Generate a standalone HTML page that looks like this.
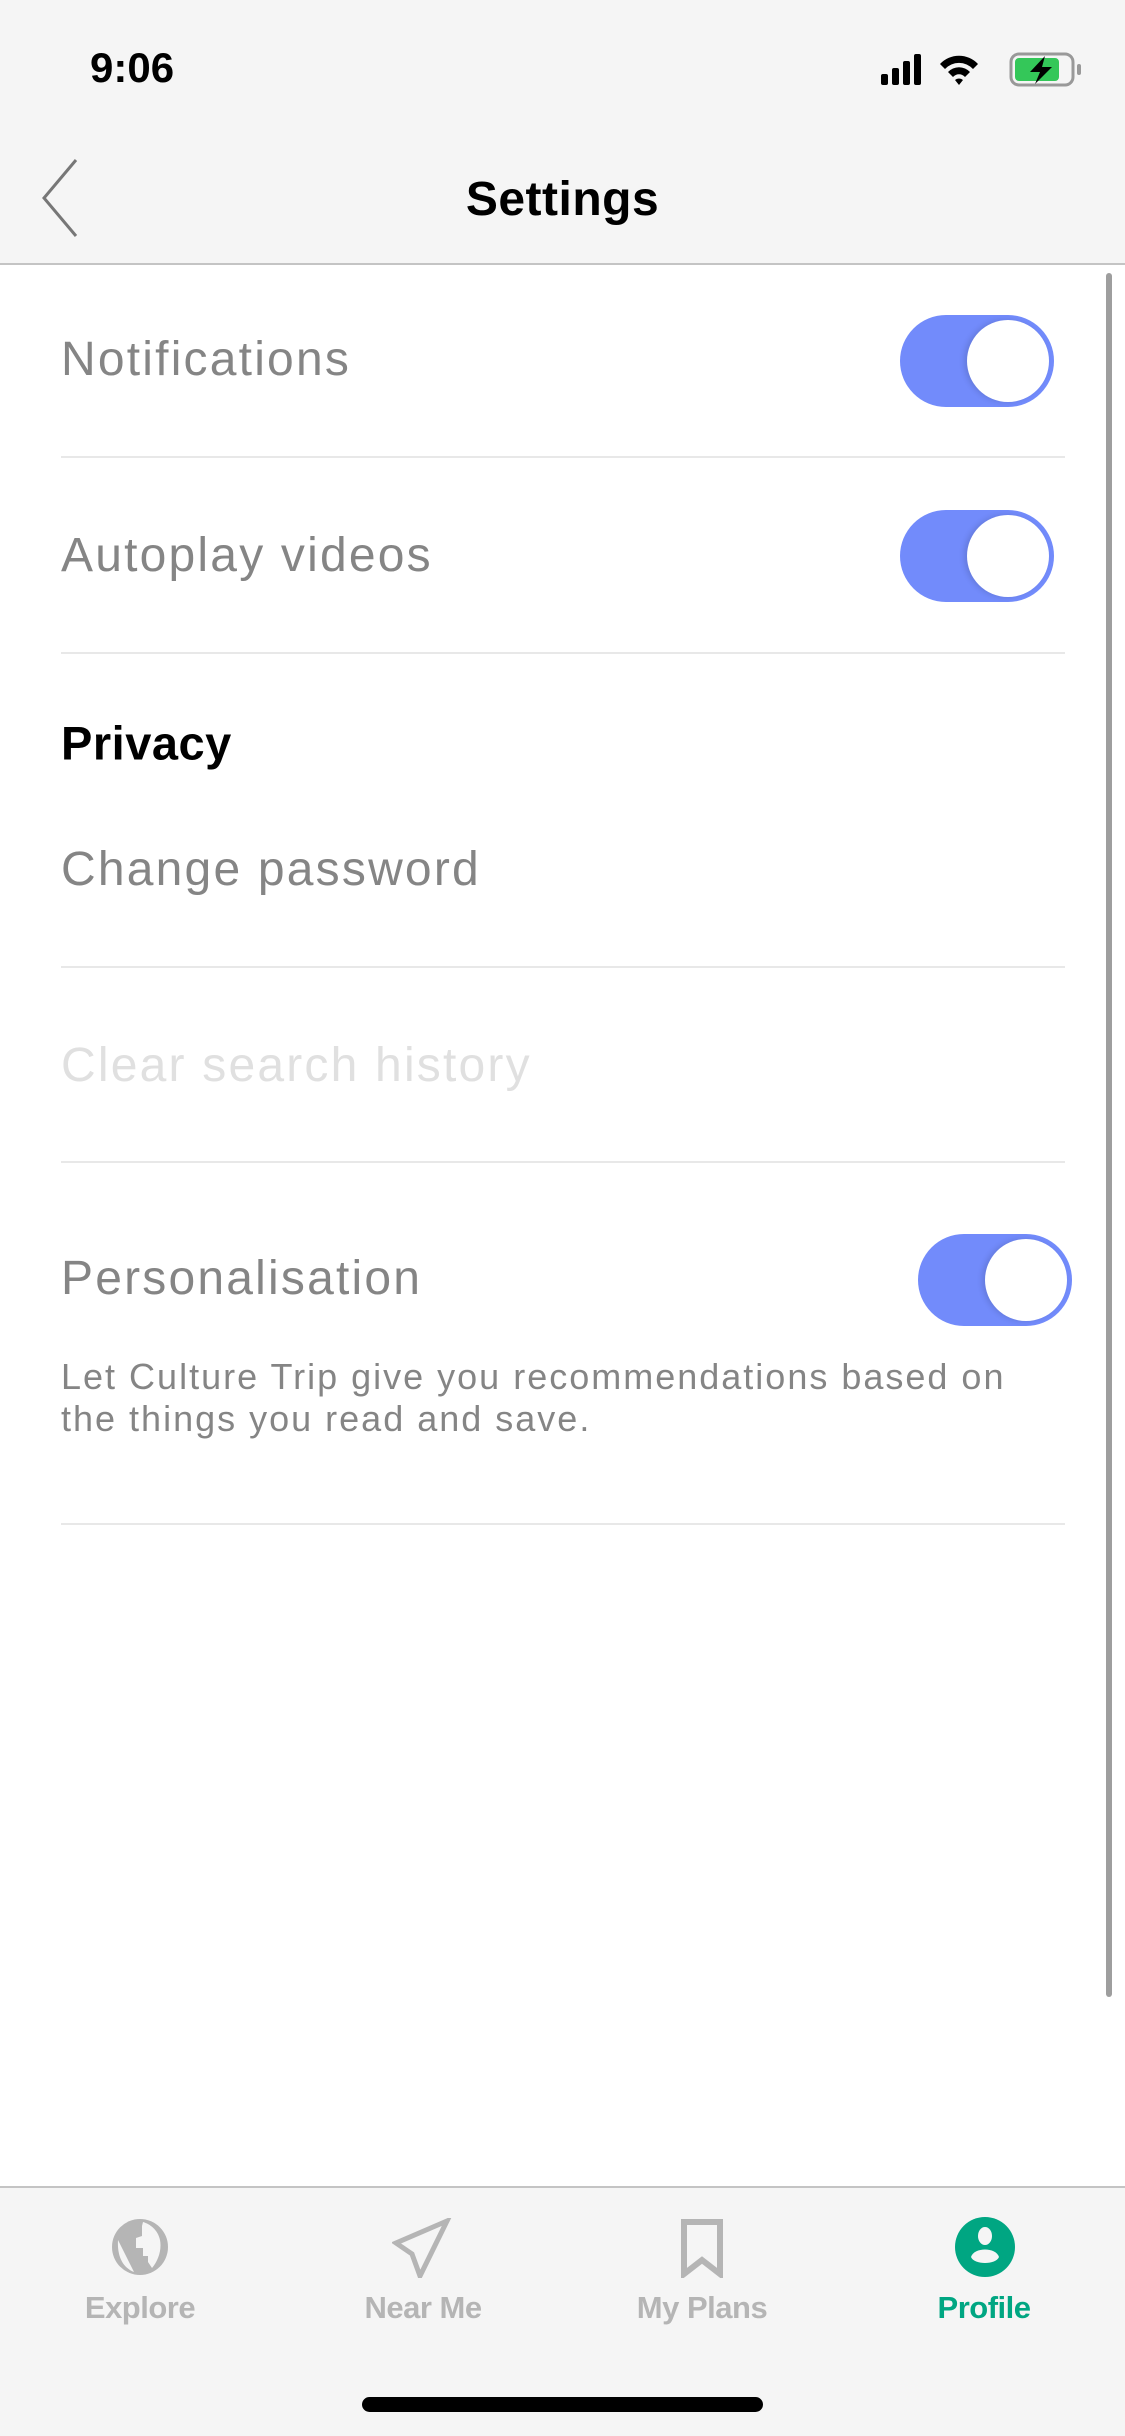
<!DOCTYPE html>
<html><head><meta charset="utf-8"><style>
*{margin:0;padding:0;box-sizing:border-box}
body{width:1125px;height:2436px;background:#fff;font-family:"Liberation Sans",sans-serif;position:relative;overflow:hidden}
.abs{position:absolute}
.hdr{left:0;top:0;width:1125px;height:265px;background:#f5f5f5;border-bottom:2px solid #c4c4c4}
.item{left:61px;font-size:48px;color:#858585;line-height:1;transform:translateY(-50%);letter-spacing:2.2px;white-space:nowrap}
.div{left:61px;width:1004px;height:2px;background:#e8e8e8}
.tog{width:154px;height:92px;border-radius:46px;background:#728bfb}
.tog::after{content:"";position:absolute;right:5px;top:5px;width:82px;height:82px;border-radius:50%;background:#fff;box-shadow:-3px 0 6px rgba(0,0,0,.12)}
.tab{background:#f5f5f5;left:0;top:2186px;width:1125px;height:250px;border-top:2px solid #c4c4c4}
.lbl{font-size:31px;font-weight:bold;color:#b5b5b5;transform:translateX(-50%);top:2290px;letter-spacing:-0.5px}
</style></head><body>
<div class="abs hdr"></div>
<div class="abs" style="left:90px;top:44px;font-size:42px;font-weight:bold;color:#000">9:06</div>
<svg class="abs" style="left:880px;top:50px" width="205" height="40" viewBox="0 0 205 40">
<rect x="1" y="24" width="7" height="11" rx="2" fill="#000"/><rect x="12" y="18" width="7" height="17" rx="2" fill="#000"/><rect x="23" y="11" width="7" height="24" rx="2" fill="#000"/><rect x="34" y="4" width="7" height="31" rx="2" fill="#000"/>
<path d="M60 14 A26 26 0 0 1 98 14 L93 19 A19 19 0 0 0 65 19Z M68 22 A15 15 0 0 1 90 22 L85 27 A8 8 0 0 0 73 27Z M75 30 L79 35 L83 30 A6 6 0 0 0 75 30Z" fill="#000"/>
<rect x="131" y="4" width="62" height="31" rx="8" fill="none" stroke="#999" stroke-width="3"/>
<rect x="135" y="8" width="44" height="23" rx="4" fill="#34c759"/>
<rect x="197" y="14" width="4" height="11" rx="2" fill="#999"/>
<path d="M165 6 L150 22 L160 22 L155 34 L172 17 L162 17 Z" fill="#000"/>
</svg>
<svg class="abs" style="left:40px;top:158px" width="40" height="80" viewBox="0 0 40 80"><path d="M36 2 L4 40 L36 78" fill="none" stroke="#777" stroke-width="3"/></svg>
<div class="abs" style="left:0;width:1125px;text-align:center;top:172px;font-size:48px;font-weight:bold;color:#000;letter-spacing:0.5px">Settings</div>

<div class="abs item" style="top:360px">Notifications</div>
<div class="abs tog" style="left:900px;top:315px"></div>
<div class="abs div" style="top:456px"></div>
<div class="abs item" style="top:556px">Autoplay videos</div>
<div class="abs tog" style="left:900px;top:510px"></div>
<div class="abs div" style="top:652px"></div>
<div class="abs item" style="top:743px;color:#000;font-weight:bold;font-size:47px;letter-spacing:0.5px">Privacy</div>
<div class="abs item" style="top:870px">Change password</div>
<div class="abs div" style="top:966px"></div>
<div class="abs item" style="top:1066px;color:#e0e0e0">Clear search history</div>
<div class="abs div" style="top:1161px"></div>
<div class="abs item" style="top:1279px">Personalisation</div>
<div class="abs tog" style="left:918px;top:1234px"></div>
<div class="abs" style="left:61px;top:1356px;font-size:36px;color:#858585;line-height:42px;width:1040px;letter-spacing:2px;white-space:nowrap">Let Culture Trip give you recommendations based on<br>the things you read and save.</div>
<div class="abs div" style="top:1523px"></div>
<div class="abs" style="left:1106px;top:273px;width:6px;height:1724px;border-radius:3px;background:#9e9e9e"></div>

<div class="abs tab"></div>
<svg class="abs" style="left:110px;top:2216px" width="60" height="62" viewBox="0 0 60 62">
<circle cx="30" cy="31" r="28" fill="#b5b5b5"/>
<path d="M33 6 C40 8 48 14 50 24 C52 34 48 45 42 52 L38 46 L38 40 L33 40 L33 32 L26 32 L26 22 L32 20 L32 10 Z M8 24 L20 48 L24 56 C14 52 7 42 8 24Z" fill="#f5f5f5"/>
</svg>
<svg class="abs" style="left:392px;top:2218px" width="60" height="60" viewBox="0 0 60 60"><path d="M55 3 L4 25 L20 36 L28 58 Z" fill="none" stroke="#b5b5b5" stroke-width="5" stroke-linejoin="miter"/></svg>
<svg class="abs" style="left:680px;top:2218px" width="44" height="60" viewBox="0 0 44 60"><path d="M4 4 H40 V56 L22 42 L4 56 Z" fill="none" stroke="#b5b5b5" stroke-width="6"/></svg>
<svg class="abs" style="left:954px;top:2216px" width="62" height="62" viewBox="0 0 62 62"><circle cx="31" cy="31" r="30" fill="#00a682"/><ellipse cx="31" cy="20" rx="7" ry="9" fill="#f5f5f5"/><path d="M17 41 C20 31 42 31 45 41 C42 49 20 49 17 41Z" fill="#f5f5f5"/></svg>
<div class="abs lbl" style="left:140px">Explore</div>
<div class="abs lbl" style="left:423px">Near Me</div>
<div class="abs lbl" style="left:702px">My Plans</div>
<div class="abs lbl" style="left:984px;color:#00a682">Profile</div>
<div class="abs" style="left:362px;top:2397px;width:401px;height:15px;border-radius:8px;background:#000"></div>
</body></html>
